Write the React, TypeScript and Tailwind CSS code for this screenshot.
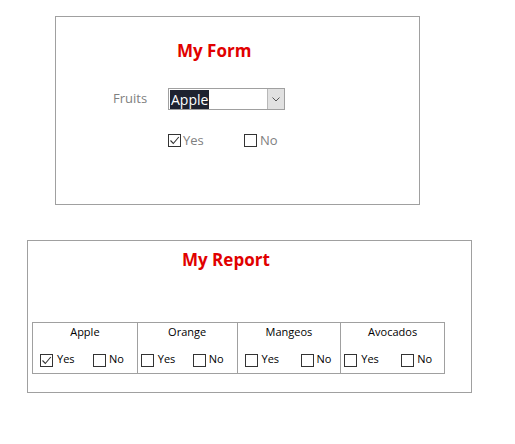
import React from "react";

const Box = ({ checked, size = 13 }: { checked?: boolean; size?: number }) => (
  <span
    className="inline-flex items-center justify-center border border-[#333] bg-white shrink-0"
    style={{ width: size, height: size }}
  >
    {checked && (
      <svg width={size - 2} height={size - 2} viewBox="0 0 11 11">
        <path d="M1.5 5.5 L4.3 8.5 L9.8 2" fill="none" stroke="#333" strokeWidth="1.1" />
      </svg>
    )}
  </span>
);

const fruits = [
  { name: "Apple", w: "w-[104px]", pl: "pl-[7px]", gap: "w-[36px]", yes: true },
  { name: "Orange", w: "w-[100px]", pl: "pl-[3px]", gap: "w-[35px]", yes: false },
  { name: "Mangeos", w: "w-[104px]", pl: "pl-[7px]", gap: "w-[39px]", yes: false },
  { name: "Avocados", w: "w-[104px]", pl: "pl-[3px]", gap: "w-[40px]", yes: false },
];

export default function App() {
  return (
    <div className="w-[515px] h-[444px] bg-white font-['Open_Sans',sans-serif] overflow-hidden">
      {/* Form */}
      <div className="ml-[55px] mt-[16px] w-[365px] h-[189px] border border-[#a0a0a0] flex flex-col">
        <div className="ml-[121px] mt-[22px] text-[17px] leading-[24px] font-bold text-[#e10000]">My Form</div>
        <div className="flex items-center mt-[25px] ml-[57px] h-[22px]">
          <span className="w-[55px] text-[13px] text-[#808080]">Fruits</span>
          <div className="w-[117px] h-[22px] border border-[#a0a0a0] flex items-stretch">
            <div className="flex-1 flex items-center pl-[1px]">
              <span className="bg-[#1e2230] text-white text-[14px] leading-[19px] px-[1px]">Apple</span>
            </div>
            <div className="w-[17px] bg-[#e1e1e1] border-l border-[#b8b8b8] flex items-center justify-center">
              <svg width="8" height="5" viewBox="0 0 8 5">
                <path d="M0.5 0.5 L4 4 L7.5 0.5" fill="none" stroke="#555" strokeWidth="1" />
              </svg>
            </div>
          </div>
        </div>
        <div className="flex items-center mt-[21px] ml-[112px] text-[13px] text-[#808080]">
          <Box checked />
          <span className="ml-[2px] w-[61px]">Yes</span>
          <Box />
          <span className="ml-[3px]">No</span>
        </div>
      </div>

      {/* Report */}
      <div className="ml-[27px] mt-[35px] w-[445px] h-[153px] border border-[#a0a0a0] flex flex-col">
        <div className="ml-[154px] mt-[7px] text-[17px] leading-[24px] font-bold text-[#e10000]">My Report</div>
        <div className="ml-[4px] mt-[50px] flex border border-[#a0a0a0] w-[413px] h-[52px]">
          {fruits.map((f, i) => (
            <div
              key={f.name}
              className={`${f.w} flex flex-col ${i > 0 ? "border-l border-[#a0a0a0]" : ""}`}
            >
              <div className="text-center text-[11px] leading-[16px] mt-[1px] text-black">{f.name}</div>
              <div className={`flex items-center mt-[14px] ${f.pl} text-[11px] leading-[14px] text-black`}>
                <Box checked={f.yes} />
                <span className={`ml-[4px] ${f.gap} -mt-[3px]`}>Yes</span>
                <Box />
                <span className="ml-[3px] -mt-[3px]">No</span>
              </div>
            </div>
          ))}
        </div>
      </div>
    </div>
  );
}
